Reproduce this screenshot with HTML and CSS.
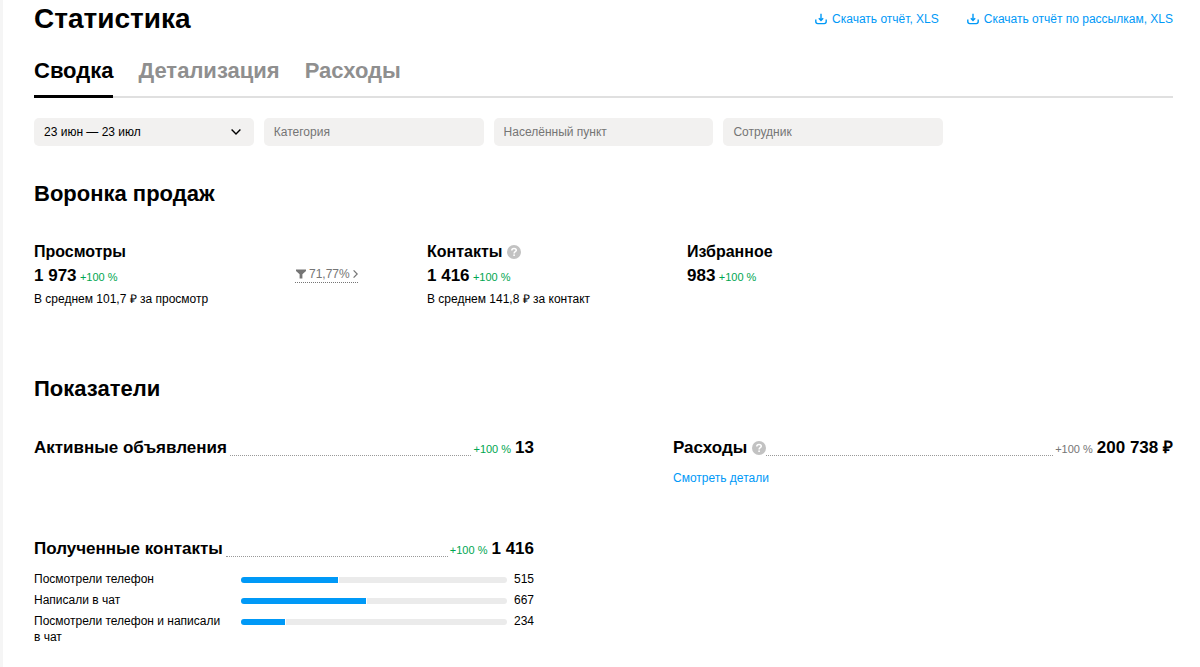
FILE: index.html
```html
<!DOCTYPE html>
<html lang="ru">
<head>
<meta charset="utf-8">
<meta name="viewport" content="width=device-width, initial-scale=1">
<title>Статистика</title>
<link rel="stylesheet" href="styles.css">
</head>
<body>
<svg class="sprite" aria-hidden="true">
  <symbol id="icon-download" viewBox="0 0 12 12">
    <path d="M6 0.8V7M3.8 5.2L6 7.4L8.2 5.2" fill="none" stroke="currentColor" stroke-width="1.4"/>
    <path d="M0.8 6.5V8.6Q0.8 10.6 2.8 10.6H9.2Q11.2 10.6 11.2 8.6V6.5" fill="none" stroke="currentColor" stroke-width="1.4"/>
  </symbol>
  <symbol id="icon-help" viewBox="0 0 14 14">
    <circle cx="7" cy="7" r="7" fill="#c2c2c2"/>
    <path d="M4.8 5.6C4.8 4.2 5.7 3.5 7 3.5S9.3 4.2 9.3 5.3C9.3 6.7 7.1 6.7 7.1 8.4" fill="none" stroke="#fff" stroke-width="1.5"/>
    <rect x="6.3" y="9.4" width="1.6" height="1.6" fill="#fff"/>
  </symbol>
</svg>
<main class="page">
  <header class="header">
    <h1 class="title">Статистика</h1>
    <div class="downloads">
      <a class="link" href="#report"><svg class="icon-download"><use href="#icon-download"/></svg>Скачать отчёт, XLS</a>
      <a class="link" href="#mailings"><svg class="icon-download"><use href="#icon-download"/></svg>Скачать отчёт по рассылкам, XLS</a>
    </div>
  </header>

  <nav class="tabs">
    <a class="tab tab-active" href="#summary" aria-current="page">Сводка</a>
    <a class="tab" href="#details">Детализация</a>
    <a class="tab" href="#expenses">Расходы</a>
  </nav>

  <form class="filters">
    <div class="period">
      <select class="field period-select" aria-label="Период"><option>23 июн — 23 июл</option></select>
      <svg class="chevron" viewBox="0 0 10 6" aria-hidden="true"><path d="M0.6 0.6L5 5L9.4 0.6" fill="none" stroke="#000" stroke-width="1.4"/></svg>
    </div>
    <input class="field" type="text" placeholder="Категория" aria-label="Категория">
    <input class="field" type="text" placeholder="Населённый пункт" aria-label="Населённый пункт">
    <input class="field" type="text" placeholder="Сотрудник" aria-label="Сотрудник">
  </form>

  <section>
    <h2 class="section-title">Воронка продаж</h2>
    <div class="funnel">
      <div>
        <h3 class="stage-title">Просмотры</h3>
        <p class="stage-value"><b class="number">1 973</b> <span class="delta">+100 %</span></p>
        <p class="note">В среднем 101,7 ₽ за просмотр</p>
      </div>
      <div class="conversion-cell">
        <button class="conversion" type="button">
          <svg class="icon-funnel" viewBox="0 0 10 10" aria-hidden="true"><path d="M0 0.5H10V2L6.4 5.2V9.5H3.6V5.2L0 2Z" fill="#757575"/></svg>
          71,77%
          <svg class="icon-next" viewBox="0 0 5 8" aria-hidden="true"><path d="M0.6 0.4L4.2 4L0.6 7.6" fill="none" stroke="#757575" stroke-width="1.2"/></svg>
        </button>
      </div>
      <div>
        <h3 class="stage-title">Контакты <svg class="icon-help"><use href="#icon-help"/></svg></h3>
        <p class="stage-value"><b class="number">1 416</b> <span class="delta">+100 %</span></p>
        <p class="note">В среднем 141,8 ₽ за контакт</p>
      </div>
      <div>
        <h3 class="stage-title">Избранное</h3>
        <p class="stage-value"><b class="number">983</b> <span class="delta">+100 %</span></p>
      </div>
    </div>
  </section>

  <section>
    <h2 class="section-title">Показатели</h2>
    <div class="metrics">
      <article class="metric">
        <div class="metric-head">
          <h3 class="metric-title">Активные объявления</h3>
          <span class="leader"></span>
          <span class="delta">+100 %</span>
          <b class="number">13</b>
        </div>
      </article>
      <article class="metric">
        <div class="metric-head">
          <h3 class="metric-title">Расходы <svg class="icon-help"><use href="#icon-help"/></svg></h3>
          <span class="leader leader-tight"></span>
          <span class="delta delta-neutral">+100 %</span>
          <b class="number">200 738 ₽</b>
        </div>
        <a class="link details" href="#expenses">Смотреть детали</a>
      </article>
      <article class="metric">
        <div class="metric-head">
          <h3 class="metric-title">Полученные контакты</h3>
          <span class="leader"></span>
          <span class="delta">+100 %</span>
          <b class="number">1 416</b>
        </div>
        <dl class="bars">
          <div class="bar-row"><dt class="bar-label">Посмотрели телефон</dt><dd class="bar"><span class="track"><span class="fill" style="width:36.4%"></span></span>515</dd></div>
          <div class="bar-row"><dt class="bar-label">Написали в чат</dt><dd class="bar"><span class="track"><span class="fill" style="width:47.1%"></span></span>667</dd></div>
          <div class="bar-row"><dt class="bar-label">Посмотрели телефон и написали в чат</dt><dd class="bar"><span class="track"><span class="fill" style="width:16.5%"></span></span>234</dd></div>
        </dl>
      </article>
    </div>
  </section>
</main>
</body>
</html>
```

FILE: styles.css
```css
* { box-sizing: border-box; }

body, h1, h2, h3, p, dl, dd { margin: 0; }

body {
  min-height: 100vh;
  border-left: 3px solid #f5f5f5;
  background: #fff;
  color: #000;
  font: 12px/16px "Liberation Sans", Arial, sans-serif;
}

.sprite { display: none; }
.page { padding: 2px 27px 20px 31px; }

.header {
  display: flex;
  justify-content: space-between;
  align-items: center;
}
.title { font-size: 28px; line-height: 34px; }
.downloads { display: flex; gap: 28px; }
.link { color: #0099f7; text-decoration: none; }
.downloads .link { display: flex; align-items: center; gap: 5px; }
.icon-download { width: 12px; height: 12px; }

.tabs {
  display: flex;
  gap: 25px;
  margin-top: 21px;
  box-shadow: inset 0 -2px #e0e0e0;
}
.tab {
  padding-bottom: 10px;
  border-bottom: 3px solid transparent;
  color: #8f8f8f;
  font-size: 22px;
  line-height: 28px;
  font-weight: bold;
  text-decoration: none;
}
.tab-active { border-color: #000; color: #000; }

.filters {
  display: grid;
  grid-template-columns: repeat(5, 1fr);
  gap: 10px;
  margin-top: 20px;
}
.field {
  width: 100%;
  min-width: 0;
  height: 28px;
  padding: 0 10px;
  border: 0;
  border-radius: 5px;
  background: #f2f1f0;
  color: #000;
  font: inherit;
}
.field::placeholder { color: #757575; }
.period { display: grid; align-items: center; }
.period > * { grid-area: 1 / 1; }
.period-select { appearance: none; }
.chevron {
  width: 10px;
  height: 6px;
  margin-right: 13px;
  justify-self: end;
  pointer-events: none;
}

.section-title {
  margin-top: 34px;
  font-size: 22px;
  line-height: 28px;
}

.funnel {
  display: grid;
  grid-template-columns: 261fr 132fr 260fr 486fr;
  min-height: 99px;
  margin-top: 34px;
}
.stage-title { font-size: 16px; line-height: 20px; }
.stage-value { margin-top: 4px; line-height: 20px; }
.number { font-size: 17px; line-height: 20px; white-space: nowrap; }
.delta { color: #00a651; font-size: 11px; white-space: nowrap; }
.delta-neutral { color: #757575; }
.note { margin-top: 4px; }
.icon-help {
  width: 14px;
  height: 14px;
  vertical-align: -2px;
}
.conversion-cell { padding-top: 24px; }
.conversion {
  display: flex;
  align-items: center;
  gap: 3px;
  padding: 0 0 0 1px;
  border: 0;
  border-bottom: 1px dotted #757575;
  background: none;
  color: #757575;
  font: inherit;
}
.icon-funnel { width: 10px; height: 10px; }
.icon-next { width: 5px; height: 8px; }

.metrics {
  display: grid;
  grid-template-columns: 1fr 1fr;
  gap: 52px 139px;
  margin-top: 34px;
}
.metric-head { display: flex; align-items: baseline; }
.metric-title { font-size: 17px; line-height: 22px; }
.leader {
  flex: 1;
  align-self: flex-end;
  margin: 0 2px 3px 3px;
  border-bottom: 1px dotted #999;
}
.leader-tight { margin-left: 0; }
.metric-head .number { margin-left: 4px; }
.details { display: inline-block; margin-top: 11px; }

.bars { margin-top: 11px; }
.bar-row { display: flex; align-items: flex-start; }
.bar-row + .bar-row { margin-top: 5px; }
.bar-label { flex: 0 0 207px; padding-right: 16px; }
.bar {
  display: flex;
  flex: 1;
  align-items: center;
  gap: 7px;
}
.track {
  flex: 1;
  height: 6px;
  margin-top: 2px;
  overflow: hidden;
  border-radius: 3px;
  background: #ebebeb;
}
.fill {
  display: block;
  box-sizing: content-box;
  height: 6px;
  border-right: 1px solid #fff;
  background: #0099f7;
}
```
